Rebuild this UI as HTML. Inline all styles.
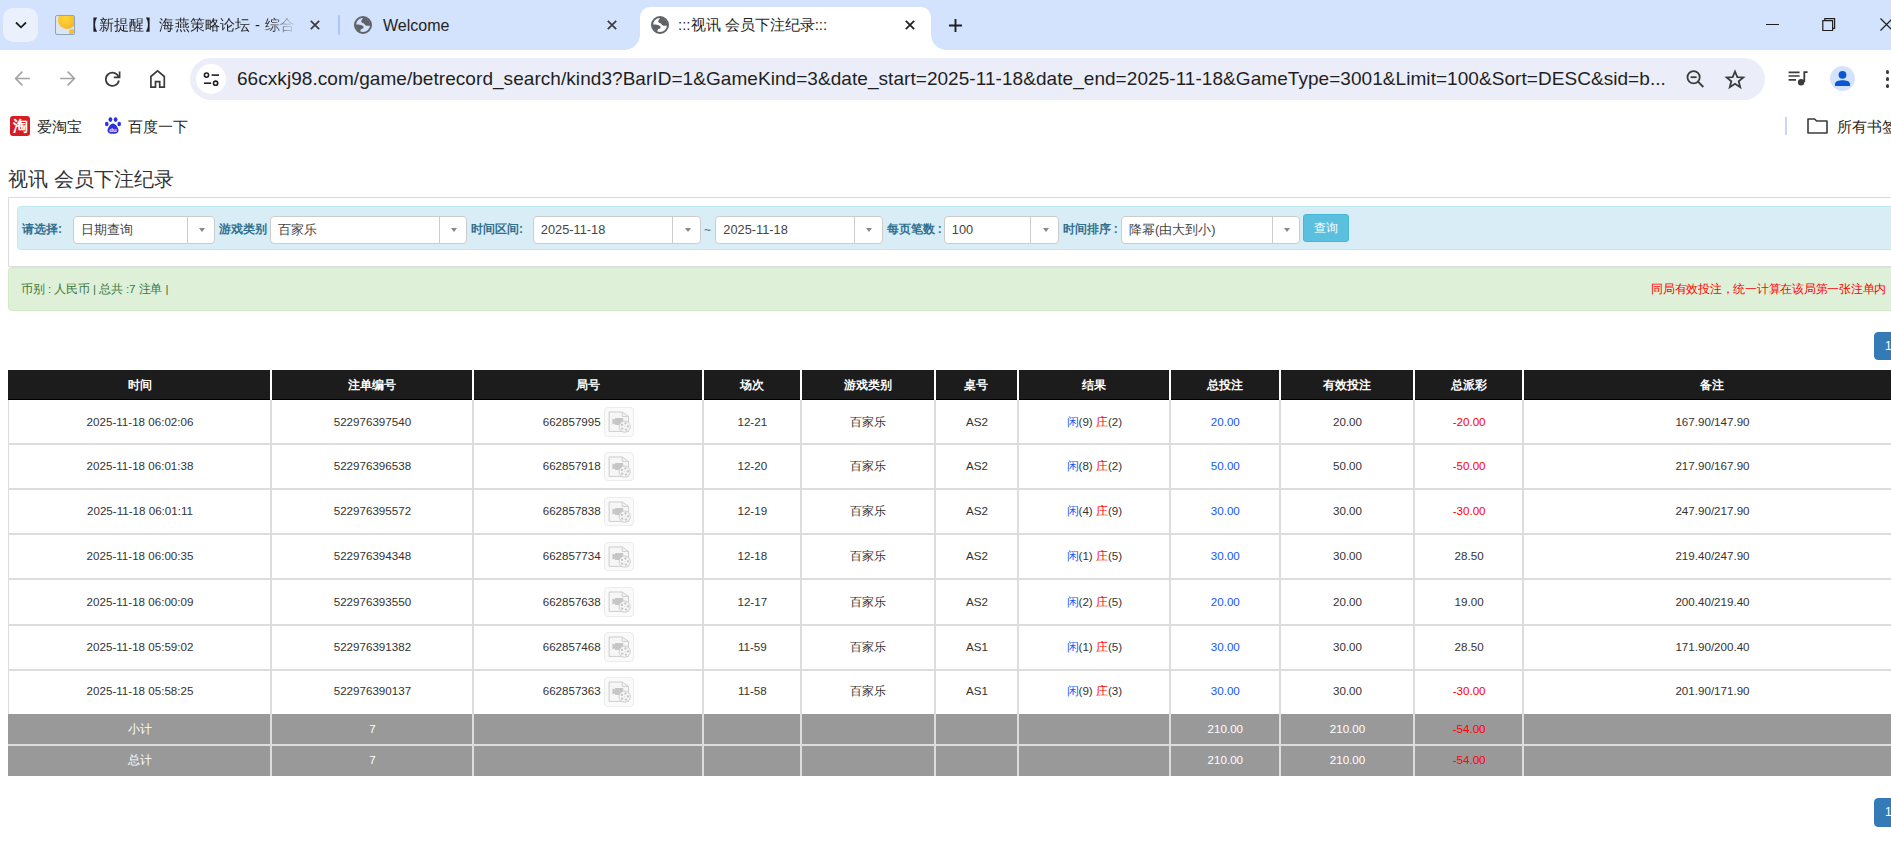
<!DOCTYPE html>
<html><head><meta charset="utf-8">
<style>
*{margin:0;padding:0;box-sizing:border-box}
html,body{width:1891px;height:860px;overflow:hidden;background:#fff;font-family:"Liberation Sans",sans-serif;}
.a{position:absolute;white-space:nowrap}
#tabbar{position:absolute;left:0;top:0;width:1891px;height:50px;background:#d3e3fd}
#toolbar{position:absolute;left:0;top:50px;width:1891px;height:55px;background:#fff}
#bmbar{position:absolute;left:0;top:105px;width:1891px;height:40px;background:#fff}
.tabtxt{font-size:15px;color:#1f1f1f;top:16px;line-height:18px}
svg{position:absolute;overflow:visible}
.lab{top:221px;font-size:12px;line-height:16px;color:#31708f;font-weight:bold}
.sel{top:216px;height:27.5px;background:#fff;border:1px solid #ccc;border-radius:4px}
.sel span{position:absolute;left:7px;top:4.5px;font-size:12.8px;line-height:16px;color:#444;white-space:nowrap}
.sel i{position:absolute;top:0;right:26.5px;width:1px;height:25.5px;background:#ccc}
.sel b{position:absolute;top:11px;right:9.2px;width:0;height:0;border-left:3px solid transparent;border-right:3px solid transparent;border-top:4px solid #888}
.pg{width:40px;background:#337ab7;border-radius:4px;border:1px solid #337ab7}
.pg span{position:absolute;left:10px;top:5px;font-size:12px;line-height:16px;color:#fff}
.th{top:377px;font-size:12px;line-height:16px;color:#fff;font-weight:bold;text-align:center}
.td{font-size:11.6px;line-height:16px;color:#333}
.tw{color:#fff}
.bl{color:#1458ff}
.rd{color:#f00}
.hl{left:8px;width:1893px;height:2px;background:#ddd}
.vl{top:369.5px;width:2px;height:31px;background:#fff}
.vh{top:400px;width:2px;height:314px;background:#ddd}
.vbtn{width:29.7px;height:29.8px;border:1px solid #ececec;border-radius:4px;background:#fafafa}
</style></head><body>
<svg width="0" height="0" style="position:absolute"><defs><symbol id="globe" viewBox="0 0 18 18"><clipPath id="gclip"><circle cx="9" cy="9" r="7.3"/></clipPath><circle cx="9" cy="9" r="8" style="fill:var(--gbg,#fff)" stroke="#5f6368" stroke-width="2"/><g clip-path="url(#gclip)" fill="#5f6368"><path d="M10.8 0 C9 2.5 7 4 7.3 5.8 C7.6 7.2 9.4 6.9 10.2 7.8 C10.9 8.7 11.3 9.7 13 9.8 C15 9.8 16.5 9.2 18 8.4 V0 Z"/><path d="M0 8.6 C2 8.6 5 8.6 7 9.1 C8.7 9.6 9.8 10.6 9.6 11.7 C9.3 12.8 7.4 12.6 6.8 13.6 C6.2 14.7 6.3 16 6.6 18 H0 Z"/></g></symbol><symbol id="vico" viewBox="0 0 30 30"><path d="M5.1 5 H18.2 L24.5 9.4 V24.4 H5.1 Z" fill="#f6f6f6" stroke="#cdcdcd" stroke-width="1"/><path d="M18.2 5 V9.4 H24.5" fill="none" stroke="#cdcdcd" stroke-width="1"/><path d="M8.4 11.5 L11 12.5 V11 H19.2 V18 H11 V16.5 L8.4 17.5 Z" fill="#c6c6c6"/><circle cx="20.7" cy="19.6" r="5.6" fill="#f6f6f6" stroke="#cdcdcd" stroke-width="1"/><circle cx="21.47" cy="16.50" r="1.15" fill="#c4c4c4"/><circle cx="23.89" cy="19.38" r="1.15" fill="#c4c4c4"/><circle cx="21.90" cy="22.57" r="1.15" fill="#c4c4c4"/><circle cx="18.25" cy="21.66" r="1.15" fill="#c4c4c4"/><circle cx="17.99" cy="17.90" r="1.15" fill="#c4c4c4"/><circle cx="20.3" cy="19.400000000000002" r="0.5" fill="#d0d0d0"/></symbol></defs></svg>
<div id="tabbar">
  <!-- dropdown button -->
  <div class="a" style="left:3px;top:8px;width:35px;height:34px;border-radius:10px;background:#eaf1fd"></div>
  <svg style="left:14px;top:20px" width="14" height="10" viewBox="0 0 14 10"><path d="M2 2.5 L7 7.3 L12 2.5" fill="none" stroke="#1f1f1f" stroke-width="1.8"/></svg>
  <!-- tab1 favicon -->
  <div class="a" style="left:55px;top:15px;width:20px;height:20px;border:1px solid #8ea4c2;border-radius:2px;background:#dde5ef;overflow:hidden">
    <div class="a" style="left:1.5px;top:-5px;width:18px;height:18px;border-radius:50%;background:radial-gradient(circle at 40% 40%,#fdd835,#f9a825)"></div>
    <div class="a" style="left:13px;top:13px;width:6px;height:6px;border-radius:50%;background:#fbc02d"></div>
  </div>
  <div class="a tabtxt" style="left:84px;width:212px;overflow:hidden;word-spacing:0.6px;letter-spacing:0.1px;-webkit-mask-image:linear-gradient(90deg,#000 185px,transparent 212px)">【新提醒】海燕策略论坛 - 综合讨论区</div>
  <svg style="left:310px;top:20px" width="10" height="10" viewBox="0 0 10 10"><path d="M0.8 0.8 L9.2 9.2 M9.2 0.8 L0.8 9.2" stroke="#3b3b3b" stroke-width="1.7"/></svg>
  <div class="a" style="left:338px;top:15px;width:2px;height:20px;background:#a8c7fa;border-radius:1px"></div>
  <!-- tab2 -->
  <svg style="left:354px;top:16px;--gbg:#d3e3fd" width="18" height="18" viewBox="0 0 18 18"><use href="#globe"/></svg>
  <div class="a tabtxt" style="left:383px;font-size:16px;top:17px">Welcome</div>
  <svg style="left:607px;top:20px" width="10" height="10" viewBox="0 0 10 10"><path d="M0.8 0.8 L9.2 9.2 M9.2 0.8 L0.8 9.2" stroke="#3b3b3b" stroke-width="1.7"/></svg>
  <!-- active tab -->
  <div class="a" style="left:640px;top:7px;width:291px;height:43px;background:#fff;border-radius:10px 10px 0 0"></div>
  <div class="a" style="left:625px;top:35px;width:15px;height:15px;background:radial-gradient(circle at 0 0,transparent 14.5px,#fff 15px)"></div>
  <div class="a" style="left:931px;top:35px;width:15px;height:15px;background:radial-gradient(circle at 100% 0,transparent 14.5px,#fff 15px)"></div>
  <svg style="left:651px;top:16px" width="18" height="18" viewBox="0 0 18 18"><use href="#globe"/></svg>
  <div class="a tabtxt" style="left:678px">:::视讯 会员下注纪录:::</div>
  <svg style="left:905px;top:20px" width="10" height="10" viewBox="0 0 10 10"><path d="M0.8 0.8 L9.2 9.2 M9.2 0.8 L0.8 9.2" stroke="#1f1f1f" stroke-width="1.7"/></svg>
  <svg style="left:949px;top:19px" width="13" height="13" viewBox="0 0 13 13"><path d="M6.5 0 V13 M0 6.5 H13" stroke="#1f1f1f" stroke-width="1.9"/></svg>
  <!-- window controls -->
  <div class="a" style="left:1766px;top:24px;width:13px;height:1.2px;background:#1f1f1f"></div>
  <svg style="left:1822px;top:18px" width="14" height="14" viewBox="0 0 14 14"><path d="M0.8 2.6 H10.6 V12.5 H0.8 Z" fill="none" stroke="#1f1f1f" stroke-width="1.2"/><path d="M2.8 2.6 V0.6 H12.6 V10.4 H10.6" fill="none" stroke="#1f1f1f" stroke-width="1.2"/></svg>
  <svg style="left:1880px;top:18px" width="13" height="13" viewBox="0 0 13 13"><path d="M0.5 0.5 L12.5 12.5 M12.5 0.5 L0.5 12.5" stroke="#1f1f1f" stroke-width="1.2"/></svg>
</div>

<div id="toolbar">
  <svg style="left:15px;top:21px" width="15" height="15" viewBox="0 0 15 15"><path d="M0.6 7.5 H14.8 M7.4 0.6 L0.6 7.5 L7.4 14.4" fill="none" stroke="#a3a3a3" stroke-width="1.6"/></svg>
  <svg style="left:60px;top:21px" width="15" height="15" viewBox="0 0 15 15"><path d="M14.4 7.5 H0.2 M7.6 0.6 L14.4 7.5 L7.6 14.4" fill="none" stroke="#a3a3a3" stroke-width="1.6"/></svg>
  <svg style="left:105px;top:21px" width="16" height="16" viewBox="0 0 16 16"><path d="M13.6 6 A6.6 6.6 0 1 0 13.9 9.5" fill="none" stroke="#3b3b3b" stroke-width="1.7"/><path d="M14.6 0.5 V6.3 H8.8" fill="none" stroke="#3b3b3b" stroke-width="1.7"/></svg>
  <svg style="left:150px;top:20px" width="16" height="18" viewBox="0 0 16 18"><path d="M0.9 17.1 V6.5 L7.6 0.9 L14.3 6.5 V17.1 H9.7 V11.6 H5.5 V17.1 Z" fill="none" stroke="#3b3b3b" stroke-width="1.7" stroke-linejoin="miter"/></svg>
  <div class="a" style="left:190px;top:8px;width:1575px;height:42px;border-radius:21px;background:#ebeef8"></div>
  <div class="a" style="left:196px;top:14px;width:30px;height:30px;border-radius:50%;background:#fff"></div>
  <svg style="left:203px;top:22px" width="17" height="14" viewBox="0 0 17 14"><circle cx="3.5" cy="3.1" r="2.1" fill="none" stroke="#1f1f1f" stroke-width="1.6"/><path d="M8.6 3.1 H16" stroke="#1f1f1f" stroke-width="1.6"/><circle cx="12.6" cy="11.2" r="2.1" fill="none" stroke="#1f1f1f" stroke-width="1.6"/><path d="M1 11.2 H8.2" stroke="#1f1f1f" stroke-width="1.6"/></svg>
  <div class="a" id="url" style="left:237px;top:17px;font-size:19px;letter-spacing:0.055px;line-height:24px;color:#1f1f1f">66cxkj98.com/game/betrecord_search/kind3?BarID=1&amp;GameKind=3&amp;date_start=2025-11-18&amp;date_end=2025-11-18&amp;GameType=3001&amp;Limit=100&amp;Sort=DESC&amp;sid=b...</div>
  <svg style="left:1685px;top:18px" width="20" height="20" viewBox="0 0 20 20"><circle cx="8.6" cy="9.2" r="6.1" fill="none" stroke="#3b3b3b" stroke-width="1.8"/><path d="M5.6 9.2 H11.6" stroke="#3b3b3b" stroke-width="1.8"/><path d="M13 13.6 L18.3 19" stroke="#3b3b3b" stroke-width="1.9"/></svg>
  <svg style="left:1724px;top:19px" width="22" height="21" viewBox="0 0 22 21"><g transform="translate(11 10.5) scale(0.9) translate(-11 -10.5)"><path d="M11 1.6 L13.6 7.8 L20.2 8.2 L15.1 12.4 L16.8 19 L11 15.3 L5.2 19 L6.9 12.4 L1.8 8.2 L8.4 7.8 Z" fill="none" stroke="#3b3b3b" stroke-width="2" stroke-linejoin="miter"/></g></svg>
  <svg style="left:1788px;top:20px" width="20" height="16" viewBox="0 0 20 16"><path d="M0.6 2.3 H11.6 M0.6 6 H11.6 M0.6 9.8 H8" stroke="#3b3b3b" stroke-width="1.7"/><path d="M16.3 12 V2.2 H19.6" fill="none" stroke="#3b3b3b" stroke-width="1.8"/><circle cx="13.1" cy="12.2" r="3.2" fill="#3b3b3b"/></svg>
  <div class="a" style="left:1830px;top:16px;width:25px;height:25px;border-radius:50%;background:#d3e3fd"></div>
  <svg style="left:1834px;top:20px" width="17" height="17" viewBox="0 0 17 17"><circle cx="8.5" cy="4.8" r="3.9" fill="#0b57d0"/><path d="M1 16 V14 C1 11.2 5 10.2 8.5 10.2 C12 10.2 16 11.2 16 14 V16 Z" fill="#0b57d0"/></svg>
  <div class="a" style="left:1885.5px;top:20px;width:3.6px;height:3.6px;border-radius:50%;background:#3b3b3b"></div>
  <div class="a" style="left:1885.5px;top:27px;width:3.6px;height:3.6px;border-radius:50%;background:#3b3b3b"></div>
  <div class="a" style="left:1885.5px;top:34px;width:3.6px;height:3.6px;border-radius:50%;background:#3b3b3b"></div>
</div>
<div id="bmbar">
  <div class="a" style="left:10px;top:11px;width:20px;height:20px;border-radius:3px;background:#d91c24;color:#fff;font-size:15px;line-height:20px;text-align:center;font-weight:bold">淘</div>
  <div class="a" style="left:37px;top:12px;font-size:15px;line-height:20px;color:#1f1f1f">爱淘宝</div>
  <svg style="left:105px;top:12px" width="16" height="17" viewBox="0 0 16 17"><ellipse cx="5.4" cy="2.6" rx="1.9" ry="2.4" fill="#2932e1"/><ellipse cx="10.6" cy="2.6" rx="1.9" ry="2.4" fill="#2932e1"/><ellipse cx="1.8" cy="7" rx="1.8" ry="2.2" fill="#2932e1"/><ellipse cx="14.2" cy="7" rx="1.8" ry="2.2" fill="#2932e1"/><path d="M8 6.5 C5.5 6.5 2.5 11 2.5 13.5 C2.5 16 4.5 16.8 8 16.8 C11.5 16.8 13.5 16 13.5 13.5 C13.5 11 10.5 6.5 8 6.5 Z" fill="#2932e1"/><text x="8" y="15.2" font-size="6" font-family="Liberation Sans" font-weight="bold" fill="#fff" text-anchor="middle">du</text></svg>
  <div class="a" style="left:128px;top:12px;font-size:15px;line-height:20px;color:#1f1f1f">百度一下</div>
  <div class="a" style="left:1785px;top:12px;width:2px;height:18px;background:#c7d7f5"></div>
  <svg style="left:1807px;top:13px" width="21" height="16" viewBox="0 0 21 16"><path d="M1 1 H7.6 L9.6 3 H20 V15 H1 Z" fill="none" stroke="#3b3b3b" stroke-width="1.6" stroke-linejoin="round"/></svg>
  <div class="a" style="left:1837px;top:12px;font-size:15px;line-height:20px;color:#1f1f1f">所有书签</div>
</div>

<div id="page">
  <div class="a" style="left:8px;top:166px;font-size:20px;line-height:26px;color:#333">视讯 会员下注纪录</div>
  <div class="a" style="left:8px;top:197px;width:1900px;height:70px;border:1px solid #ddd;background:#fff"></div>
  <div class="a" style="left:17px;top:206px;width:1890px;height:44px;border:1px solid #bce8f1;border-radius:4px;background:#d9edf7"></div>
  <div class="a lab" style="left:22px">请选择:</div>
  <div class="a lab" style="left:219px">游戏类别</div>
  <div class="a lab" style="left:471px">时间区间:</div>
  <div class="a" style="left:704px;top:222px;font-size:12px;line-height:16px;color:#31708f">~</div>
  <div class="a lab" style="left:886.5px">每页笔数 :</div>
  <div class="a lab" style="left:1062.5px">时间排序 :</div>
  <div class="a sel" style="left:72.5px;width:142.7px"><span>日期查询</span><i></i><b></b></div>
  <div class="a sel" style="left:269.5px;width:197.8px"><span>百家乐</span><i></i><b></b></div>
  <div class="a sel" style="left:532.8px;width:168.2px"><span>2025-11-18</span><i></i><b></b></div>
  <div class="a sel" style="left:715.3px;width:167.3px"><span>2025-11-18</span><i></i><b></b></div>
  <div class="a sel" style="left:943.8px;width:115.2px"><span>100</span><i></i><b></b></div>
  <div class="a sel" style="left:1120.9px;width:179.2px"><span>降幂(由大到小)</span><i></i><b></b></div>
  <div class="a" style="left:1303px;top:214px;width:46px;height:28px;border-radius:3px;background:#5bc0de;border:1px solid #46b8da;color:#fff;font-size:12px;line-height:26px;text-align:center">查询</div>
  <div class="a" style="left:8px;top:267px;width:1900px;height:44px;border:1px solid #d6e9c6;border-radius:4px;background:#dff0d8"></div>
  <div class="a" style="left:21px;top:281px;letter-spacing:-0.1px;font-size:11.6px;line-height:16px;color:#3c763d">币别 : 人民币 | 总共 :7 注单 |</div>
  <div class="a" style="left:1651px;top:281px;letter-spacing:-0.25px;font-size:11.6px;line-height:16px;color:#f00">同局有效投注，统一计算在该局第一张注单内</div>
  <div class="a pg" style="left:1874px;top:332px;height:28px"><span>1</span></div>
  <div class="a pg" style="left:1874px;top:798px;height:28.5px"><span>1</span></div>
  <div class="a" style="left:8px;top:369.5px;width:1893px;height:30.5px;background:#1c1c1c;border-bottom:1px solid #000"></div>
  <div class="a th" style="left:79.5px;width:120px">时间</div>
  <div class="a th" style="left:311.9px;width:120px">注单编号</div>
  <div class="a th" style="left:527.9px;width:120px">局号</div>
  <div class="a th" style="left:691.8px;width:120px">场次</div>
  <div class="a th" style="left:807.8px;width:120px">游戏类别</div>
  <div class="a th" style="left:916.4px;width:120px">桌号</div>
  <div class="a th" style="left:1033.8px;width:120px">结果</div>
  <div class="a th" style="left:1164.8px;width:120px">总投注</div>
  <div class="a th" style="left:1287.0px;width:120px">有效投注</div>
  <div class="a th" style="left:1408.6px;width:120px">总派彩</div>
  <div class="a th" style="left:1652.0px;width:120px">备注</div>
  <div class="a" style="left:8px;top:400px;width:1893px;height:314px;background:#fff;border-left:1px solid #ddd"></div>
  <div class="a hl" style="top:443.3px"></div>
  <div class="a hl" style="top:488.1px"></div>
  <div class="a hl" style="top:533.0px"></div>
  <div class="a hl" style="top:578.0px"></div>
  <div class="a hl" style="top:623.9px"></div>
  <div class="a hl" style="top:668.8px"></div>
  <div class="a vl" style="left:270.0px"></div>
  <div class="a vh" style="left:270.0px"></div>
  <div class="a vl" style="left:471.7px"></div>
  <div class="a vh" style="left:471.7px"></div>
  <div class="a vl" style="left:702.0px"></div>
  <div class="a vh" style="left:702.0px"></div>
  <div class="a vl" style="left:799.6px"></div>
  <div class="a vh" style="left:799.6px"></div>
  <div class="a vl" style="left:934.0px"></div>
  <div class="a vh" style="left:934.0px"></div>
  <div class="a vl" style="left:1016.8px"></div>
  <div class="a vh" style="left:1016.8px"></div>
  <div class="a vl" style="left:1168.8px"></div>
  <div class="a vh" style="left:1168.8px"></div>
  <div class="a vl" style="left:1278.7px"></div>
  <div class="a vh" style="left:1278.7px"></div>
  <div class="a vl" style="left:1413.3px"></div>
  <div class="a vh" style="left:1413.3px"></div>
  <div class="a vl" style="left:1521.9px"></div>
  <div class="a vh" style="left:1521.9px"></div>
  <div class="a td" style="left:60.0px;width:160px;text-align:center;top:413.60px">2025-11-18 06:02:06</div>
  <div class="a td" style="left:292.4px;width:160px;text-align:center;top:413.60px">522976397540</div>
  <div class="a td" style="left:542.7px;top:413.60px">662857995</div>
  <div class="a vbtn" style="left:604px;top:407.10px"><svg style="left:-1px;top:-1px" width="30" height="30" viewBox="0 0 30 30"><use href="#vico"/></svg></div>
  <div class="a td" style="left:672.3px;width:160px;text-align:center;top:413.60px">12-21</div>
  <div class="a td" style="left:788.3px;width:160px;text-align:center;top:413.60px">百家乐</div>
  <div class="a td" style="left:896.9px;width:160px;text-align:center;top:413.60px">AS2</div>
  <div class="a td" style="left:1034.3px;width:120px;text-align:center;top:413.60px"><span class="bl">闲</span>(9) <span class="rd">庄</span>(2)</div>
  <div class="a td bl" style="left:1145.3px;width:160px;text-align:center;top:413.60px">20.00</div>
  <div class="a td" style="left:1267.5px;width:160px;text-align:center;top:413.60px">20.00</div>
  <div class="a td rd" style="left:1389.1px;width:160px;text-align:center;top:413.60px">-20.00</div>
  <div class="a td" style="left:1632.5px;width:160px;text-align:center;top:413.60px">167.90/147.90</div>
  <div class="a td" style="left:60.0px;width:160px;text-align:center;top:458.20px">2025-11-18 06:01:38</div>
  <div class="a td" style="left:292.4px;width:160px;text-align:center;top:458.20px">522976396538</div>
  <div class="a td" style="left:542.7px;top:458.20px">662857918</div>
  <div class="a vbtn" style="left:604px;top:451.70px"><svg style="left:-1px;top:-1px" width="30" height="30" viewBox="0 0 30 30"><use href="#vico"/></svg></div>
  <div class="a td" style="left:672.3px;width:160px;text-align:center;top:458.20px">12-20</div>
  <div class="a td" style="left:788.3px;width:160px;text-align:center;top:458.20px">百家乐</div>
  <div class="a td" style="left:896.9px;width:160px;text-align:center;top:458.20px">AS2</div>
  <div class="a td" style="left:1034.3px;width:120px;text-align:center;top:458.20px"><span class="bl">闲</span>(8) <span class="rd">庄</span>(2)</div>
  <div class="a td bl" style="left:1145.3px;width:160px;text-align:center;top:458.20px">50.00</div>
  <div class="a td" style="left:1267.5px;width:160px;text-align:center;top:458.20px">50.00</div>
  <div class="a td rd" style="left:1389.1px;width:160px;text-align:center;top:458.20px">-50.00</div>
  <div class="a td" style="left:1632.5px;width:160px;text-align:center;top:458.20px">217.90/167.90</div>
  <div class="a td" style="left:60.0px;width:160px;text-align:center;top:503.10px">2025-11-18 06:01:11</div>
  <div class="a td" style="left:292.4px;width:160px;text-align:center;top:503.10px">522976395572</div>
  <div class="a td" style="left:542.7px;top:503.10px">662857838</div>
  <div class="a vbtn" style="left:604px;top:496.60px"><svg style="left:-1px;top:-1px" width="30" height="30" viewBox="0 0 30 30"><use href="#vico"/></svg></div>
  <div class="a td" style="left:672.3px;width:160px;text-align:center;top:503.10px">12-19</div>
  <div class="a td" style="left:788.3px;width:160px;text-align:center;top:503.10px">百家乐</div>
  <div class="a td" style="left:896.9px;width:160px;text-align:center;top:503.10px">AS2</div>
  <div class="a td" style="left:1034.3px;width:120px;text-align:center;top:503.10px"><span class="bl">闲</span>(4) <span class="rd">庄</span>(9)</div>
  <div class="a td bl" style="left:1145.3px;width:160px;text-align:center;top:503.10px">30.00</div>
  <div class="a td" style="left:1267.5px;width:160px;text-align:center;top:503.10px">30.00</div>
  <div class="a td rd" style="left:1389.1px;width:160px;text-align:center;top:503.10px">-30.00</div>
  <div class="a td" style="left:1632.5px;width:160px;text-align:center;top:503.10px">247.90/217.90</div>
  <div class="a td" style="left:60.0px;width:160px;text-align:center;top:548.00px">2025-11-18 06:00:35</div>
  <div class="a td" style="left:292.4px;width:160px;text-align:center;top:548.00px">522976394348</div>
  <div class="a td" style="left:542.7px;top:548.00px">662857734</div>
  <div class="a vbtn" style="left:604px;top:541.50px"><svg style="left:-1px;top:-1px" width="30" height="30" viewBox="0 0 30 30"><use href="#vico"/></svg></div>
  <div class="a td" style="left:672.3px;width:160px;text-align:center;top:548.00px">12-18</div>
  <div class="a td" style="left:788.3px;width:160px;text-align:center;top:548.00px">百家乐</div>
  <div class="a td" style="left:896.9px;width:160px;text-align:center;top:548.00px">AS2</div>
  <div class="a td" style="left:1034.3px;width:120px;text-align:center;top:548.00px"><span class="bl">闲</span>(1) <span class="rd">庄</span>(5)</div>
  <div class="a td bl" style="left:1145.3px;width:160px;text-align:center;top:548.00px">30.00</div>
  <div class="a td" style="left:1267.5px;width:160px;text-align:center;top:548.00px">30.00</div>
  <div class="a td" style="left:1389.1px;width:160px;text-align:center;top:548.00px">28.50</div>
  <div class="a td" style="left:1632.5px;width:160px;text-align:center;top:548.00px">219.40/247.90</div>
  <div class="a td" style="left:60.0px;width:160px;text-align:center;top:593.50px">2025-11-18 06:00:09</div>
  <div class="a td" style="left:292.4px;width:160px;text-align:center;top:593.50px">522976393550</div>
  <div class="a td" style="left:542.7px;top:593.50px">662857638</div>
  <div class="a vbtn" style="left:604px;top:587.00px"><svg style="left:-1px;top:-1px" width="30" height="30" viewBox="0 0 30 30"><use href="#vico"/></svg></div>
  <div class="a td" style="left:672.3px;width:160px;text-align:center;top:593.50px">12-17</div>
  <div class="a td" style="left:788.3px;width:160px;text-align:center;top:593.50px">百家乐</div>
  <div class="a td" style="left:896.9px;width:160px;text-align:center;top:593.50px">AS2</div>
  <div class="a td" style="left:1034.3px;width:120px;text-align:center;top:593.50px"><span class="bl">闲</span>(2) <span class="rd">庄</span>(5)</div>
  <div class="a td bl" style="left:1145.3px;width:160px;text-align:center;top:593.50px">20.00</div>
  <div class="a td" style="left:1267.5px;width:160px;text-align:center;top:593.50px">20.00</div>
  <div class="a td" style="left:1389.1px;width:160px;text-align:center;top:593.50px">19.00</div>
  <div class="a td" style="left:1632.5px;width:160px;text-align:center;top:593.50px">200.40/219.40</div>
  <div class="a td" style="left:60.0px;width:160px;text-align:center;top:638.80px">2025-11-18 05:59:02</div>
  <div class="a td" style="left:292.4px;width:160px;text-align:center;top:638.80px">522976391382</div>
  <div class="a td" style="left:542.7px;top:638.80px">662857468</div>
  <div class="a vbtn" style="left:604px;top:632.30px"><svg style="left:-1px;top:-1px" width="30" height="30" viewBox="0 0 30 30"><use href="#vico"/></svg></div>
  <div class="a td" style="left:672.3px;width:160px;text-align:center;top:638.80px">11-59</div>
  <div class="a td" style="left:788.3px;width:160px;text-align:center;top:638.80px">百家乐</div>
  <div class="a td" style="left:896.9px;width:160px;text-align:center;top:638.80px">AS1</div>
  <div class="a td" style="left:1034.3px;width:120px;text-align:center;top:638.80px"><span class="bl">闲</span>(1) <span class="rd">庄</span>(5)</div>
  <div class="a td bl" style="left:1145.3px;width:160px;text-align:center;top:638.80px">30.00</div>
  <div class="a td" style="left:1267.5px;width:160px;text-align:center;top:638.80px">30.00</div>
  <div class="a td" style="left:1389.1px;width:160px;text-align:center;top:638.80px">28.50</div>
  <div class="a td" style="left:1632.5px;width:160px;text-align:center;top:638.80px">171.90/200.40</div>
  <div class="a td" style="left:60.0px;width:160px;text-align:center;top:683.40px">2025-11-18 05:58:25</div>
  <div class="a td" style="left:292.4px;width:160px;text-align:center;top:683.40px">522976390137</div>
  <div class="a td" style="left:542.7px;top:683.40px">662857363</div>
  <div class="a vbtn" style="left:604px;top:676.90px"><svg style="left:-1px;top:-1px" width="30" height="30" viewBox="0 0 30 30"><use href="#vico"/></svg></div>
  <div class="a td" style="left:672.3px;width:160px;text-align:center;top:683.40px">11-58</div>
  <div class="a td" style="left:788.3px;width:160px;text-align:center;top:683.40px">百家乐</div>
  <div class="a td" style="left:896.9px;width:160px;text-align:center;top:683.40px">AS1</div>
  <div class="a td" style="left:1034.3px;width:120px;text-align:center;top:683.40px"><span class="bl">闲</span>(9) <span class="rd">庄</span>(3)</div>
  <div class="a td bl" style="left:1145.3px;width:160px;text-align:center;top:683.40px">30.00</div>
  <div class="a td" style="left:1267.5px;width:160px;text-align:center;top:683.40px">30.00</div>
  <div class="a td rd" style="left:1389.1px;width:160px;text-align:center;top:683.40px">-30.00</div>
  <div class="a td" style="left:1632.5px;width:160px;text-align:center;top:683.40px">201.90/171.90</div>
  <div class="a" style="left:8px;top:714px;width:1893px;height:62px;background:#999"></div>
  <div class="a" style="left:8px;top:744px;width:1893px;height:2px;background:#ddd"></div>
  <div class="a" style="left:270.0px;top:714px;width:2px;height:62px;background:#ddd"></div>
  <div class="a" style="left:471.7px;top:714px;width:2px;height:62px;background:#ddd"></div>
  <div class="a" style="left:702.0px;top:714px;width:2px;height:62px;background:#ddd"></div>
  <div class="a" style="left:799.6px;top:714px;width:2px;height:62px;background:#ddd"></div>
  <div class="a" style="left:934.0px;top:714px;width:2px;height:62px;background:#ddd"></div>
  <div class="a" style="left:1016.8px;top:714px;width:2px;height:62px;background:#ddd"></div>
  <div class="a" style="left:1168.8px;top:714px;width:2px;height:62px;background:#ddd"></div>
  <div class="a" style="left:1278.7px;top:714px;width:2px;height:62px;background:#ddd"></div>
  <div class="a" style="left:1413.3px;top:714px;width:2px;height:62px;background:#ddd"></div>
  <div class="a" style="left:1521.9px;top:714px;width:2px;height:62px;background:#ddd"></div>
  <div class="a td tw" style="left:60.0px;width:160px;text-align:center;top:720.50px">小计</div>
  <div class="a td tw" style="left:292.4px;width:160px;text-align:center;top:720.50px">7</div>
  <div class="a td tw" style="left:1145.3px;width:160px;text-align:center;top:720.50px">210.00</div>
  <div class="a td tw" style="left:1267.5px;width:160px;text-align:center;top:720.50px">210.00</div>
  <div class="a td tw rd" style="left:1389.1px;width:160px;text-align:center;top:720.50px">-54.00</div>
  <div class="a td tw" style="left:60.0px;width:160px;text-align:center;top:752.30px">总计</div>
  <div class="a td tw" style="left:292.4px;width:160px;text-align:center;top:752.30px">7</div>
  <div class="a td tw" style="left:1145.3px;width:160px;text-align:center;top:752.30px">210.00</div>
  <div class="a td tw" style="left:1267.5px;width:160px;text-align:center;top:752.30px">210.00</div>
  <div class="a td tw rd" style="left:1389.1px;width:160px;text-align:center;top:752.30px">-54.00</div>
</div>
</body></html>
